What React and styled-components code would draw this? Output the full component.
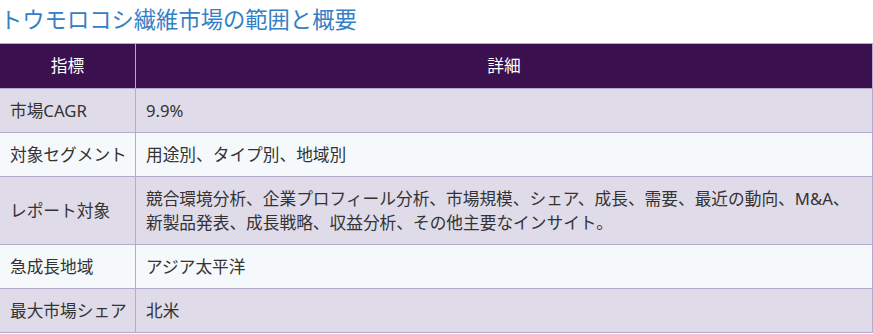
import React from 'react'
import styled, { createGlobalStyle } from 'styled-components'

const rows = [
  { label: '市場CAGR', value: ['9.9%'] },
  { label: '対象セグメント', value: ['用途別、タイプ別、地域別'] },
  {
    label: 'レポート対象',
    value: [
      '競合環境分析、企業プロフィール分析、市場規模、シェア、成長、需要、最近の動向、M&A、',
      '新製品発表、成長戦略、収益分析、その他主要なインサイト。',
    ],
  },
  { label: '急成長地域', value: ['アジア太平洋'] },
  { label: '最大市場シェア', value: ['北米'] },
]

export default function App() {
  return (
    <>
      <GlobalStyle />
      <Wrapper>
        <Title>トウモロコシ繊維市場の範囲と概要</Title>
        <Table>
          <colgroup>
            <col style={{ width: '136px' }} />
            <col />
          </colgroup>
          <thead>
            <tr>
              <HeadCell>指標</HeadCell>
              <HeadCell>詳細</HeadCell>
            </tr>
          </thead>
          <tbody>
            {rows.map((row, i) => (
              <Row key={row.label} $odd={i % 2 === 0}>
                <Cell>{row.label}</Cell>
                <Cell>
                  {row.value.map((line) => (
                    <Line key={line}>{line}</Line>
                  ))}
                </Cell>
              </Row>
            ))}
          </tbody>
        </Table>
      </Wrapper>
    </>
  )
}

const GlobalStyle = createGlobalStyle`
  body {
    margin: 0;
    background: #fff;
    font-family: "Noto Sans", "Noto Sans CJK JP", sans-serif;
    overflow: hidden;
  }
`

const Wrapper = styled.div`
  width: 873px;
`

const Title = styled.h2`
  margin: 0 0 9px 0;
  padding-top: 3px;
  font-size: 22.3px;
  font-weight: 400;
  line-height: 31px;
  color: #3380c6;
  font-family: "Noto Sans CJK JP", sans-serif;
`

const Table = styled.table`
  width: 874px;
  margin-left: -1px;
  border-collapse: collapse;
  table-layout: fixed;
  font-size: 16.7px;
  color: #333;
`

const HeadCell = styled.th`
  background: #3a114e;
  color: #fff;
  font-weight: 400;
  text-align: center;
  height: 44px;
  padding: 0 10px;
  border: 1px solid #b3abcb;
  line-height: 24px;
`

const Row = styled.tr`
  background: ${(p) => (p.$odd ? '#dfdbe9' : '#f5f9fc')};
`

const Cell = styled.td`
  padding: 9.5px 10px;
  border: 1px solid #b3abcb;
  line-height: 24px;
  vertical-align: middle;
  white-space: nowrap;
`

const Line = styled.span`
  display: block;
`
